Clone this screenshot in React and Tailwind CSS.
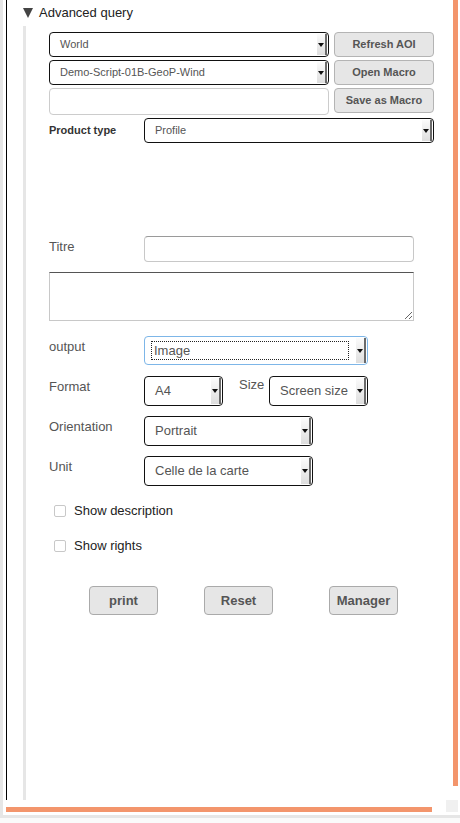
import React from "react";

const font = { fontFamily: '"Liberation Sans", Arial, sans-serif' };

function Arrow() {
  return (
    <div className="my-[1px] mr-[1px] flex w-[10px] items-center justify-center bg-gradient-to-b from-[#fbfbfb] to-[#dedede] shadow-[inset_-2px_0_0_#6a6a6a]">
      <span className="mr-[2px] h-0 w-0 border-x-[3px] border-t-[4px] border-x-transparent border-t-[#111]" />
    </div>
  );
}

function Select({ value, className = "", small, focus }) {
  return (
    <div
      className={`flex shrink-0 items-stretch rounded-[4px] border bg-white ${
        focus ? "border-[#7db6e8]" : "border-[#111]"
      } ${className}`}
    >
      <div className={`flex flex-1 items-center ${focus ? "pl-[6px]" : "pl-[10px]"}`}>
        {focus ? (
          <span className="flex h-[19px] w-[198px] items-center border border-dotted border-[#222] pl-[2px] text-[13px] text-[#555]">
            {value}
          </span>
        ) : (
          <span className={small ? "text-[11px] text-[#555]" : "text-[13px] text-[#555]"}>{value}</span>
        )}
      </div>
      <Arrow />
    </div>
  );
}

function SmallButton({ children }) {
  return (
    <button className="h-[25px] w-[100px] shrink-0 rounded-[4px] border border-[#b4b4b4] bg-[#e6e6e6] text-[11px] font-bold text-[#555]">
      {children}
    </button>
  );
}

function BigButton({ children, className = "" }) {
  return (
    <button
      className={`h-[29px] w-[69px] rounded-[4px] border border-[#aaa] bg-[#e6e6e6] text-[13px] font-bold text-[#555] ${className}`}
    >
      {children}
    </button>
  );
}

function Check({ label, className = "" }) {
  return (
    <div className={`flex h-[16px] items-center ${className}`}>
      <span className="ml-[5px] h-[12px] w-[12px] rounded-[2px] border border-[#c8c8c8] bg-white" />
      <span className="ml-[8px] text-[13px] text-[#222]">{label}</span>
    </div>
  );
}

function Label({ children, className = "" }) {
  return (
    <div className={`w-[95px] shrink-0 pt-[3px] text-[13px] leading-[15px] text-[#555] ${className}`}>{children}</div>
  );
}

export default function App() {
  return (
    <div className="h-[823px] w-[460px] bg-[#fafafa]" style={font}>
      <div className="flex h-[818px] border-b-[3px] border-l-[3px] border-[#e6e6e6] bg-white">
        {/* main column */}
        <div className="flex flex-1 flex-col">
          <div className="ml-[3px] flex h-[800px] flex-col border-l border-black">
            {/* header */}
            <div className="flex h-[26px] items-center pl-[16px]">
              <span className="h-0 w-0 border-x-[5.5px] border-t-[10px] border-x-transparent border-t-[#444]" />
              <span className="ml-[6px] text-[13px] text-[#222]">Advanced query</span>
            </div>

            {/* body */}
            <div className="ml-[16px] flex flex-1 flex-col border-l-[3px] border-[#e6e6e6] pl-[23px] pt-[6px]">
              <div className="flex gap-[5px]">
                <Select value="World" small className="h-[25px] w-[280px]" />
                <SmallButton>Refresh AOI</SmallButton>
              </div>
              <div className="mt-[3px] flex gap-[5px]">
                <Select value="Demo-Script-01B-GeoP-Wind" small className="h-[25px] w-[280px]" />
                <SmallButton>Open Macro</SmallButton>
              </div>
              <div className="mt-[3px] flex items-start gap-[5px]">
                <input className="h-[27px] w-[280px] rounded-[4px] border border-[#ccc] bg-white outline-none" />
                <SmallButton>Save as Macro</SmallButton>
              </div>
              <div className="mt-[3px] flex">
                <div className="w-[95px] shrink-0 pt-[4px] text-[11px] font-bold text-[#333]">Product type</div>
                <Select value="Profile" small className="h-[25px] w-[290px]" />
              </div>

              <div className="mt-[93px] flex">
                <Label>Titre</Label>
                <input className="h-[26px] w-[270px] rounded-[4px] border border-[#c8c8c8] border-t-[#9a9a9a] bg-white outline-none" />
              </div>
              <textarea className="mt-[10px] h-[49px] w-[365px] border border-[#c8c8c8] border-t-[#555] bg-white outline-none" />

              <div className="mt-[15px] flex">
                <Label>output</Label>
                <Select value="Image" focus className="h-[29px] w-[224px]" />
              </div>
              <div className="mt-[11px] flex">
                <Label>Format</Label>
                <Select value="A4" className="h-[30px] w-[79px]" />
                <div className="ml-[16px] w-[30px] pt-[1px] text-[13px] leading-[15px] text-[#555]">Size</div>
                <Select value="Screen size" className="h-[30px] w-[99px]" />
              </div>
              <div className="mt-[10px] flex">
                <Label>Orientation</Label>
                <Select value="Portrait" className="h-[30px] w-[169px]" />
              </div>
              <div className="mt-[10px] flex">
                <Label>Unit</Label>
                <Select value="Celle de la carte" className="h-[30px] w-[169px]" />
              </div>

              <Check label="Show description" className="mt-[17px]" />
              <Check label="Show rights" className="mt-[19px]" />

              <div className="mt-[32px] flex">
                <BigButton className="ml-[40px]">print</BigButton>
                <BigButton className="ml-[46px]">Reset</BigButton>
                <BigButton className="ml-[56px]">Manager</BigButton>
              </div>
            </div>
          </div>

          {/* horizontal scrollbar */}
          <div className="pt-[7px]">
            <div className="ml-[3px] h-[5px] w-[426px] bg-[#f3956c]" />
          </div>
        </div>

        {/* vertical scrollbar */}
        <div className="flex w-[14px] flex-col pr-[2px]">
          <div className="h-[786px] w-[5px] self-end bg-[#f3956c]" />
          <div className="mt-[14px] h-[12px] w-[12px] bg-[#f0f0f0]" />
        </div>
      </div>
    </div>
  );
}
